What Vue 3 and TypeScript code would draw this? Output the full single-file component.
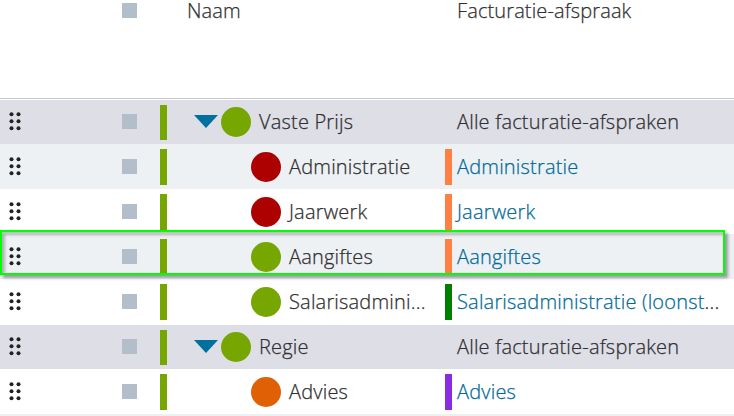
<script setup lang="ts">
interface Row { name: string; agreement: string; kind: 'group' | 'item'; dot: string; bar?: string }
const rows: Row[] = [
  { name: 'Vaste Prijs', agreement: 'Alle facturatie-afspraken', kind: 'group', dot: 'green' },
  { name: 'Administratie', agreement: 'Administratie', kind: 'item', dot: 'red', bar: 'coral' },
  { name: 'Jaarwerk', agreement: 'Jaarwerk', kind: 'item', dot: 'red', bar: 'coral' },
  { name: 'Aangiftes', agreement: 'Aangiftes', kind: 'item', dot: 'green', bar: 'coral' },
  { name: 'Salarisadmini...', agreement: 'Salarisadministratie (loonst', kind: 'item', dot: 'green', bar: 'forest' },
  { name: 'Regie', agreement: 'Alle facturatie-afspraken', kind: 'group', dot: 'green' },
  { name: 'Advies', agreement: 'Advies', kind: 'item', dot: 'orange', bar: 'purple' },
]
</script>

<template>
  <div class="sheet">
    <div class="head">
      <span></span><span class="box"></span><span></span>
      <span class="title">Naam</span><span></span><span class="title">Facturatie-afspraak</span>
    </div>
    <div v-for="(row, i) in rows" :key="i" class="row" :class="[row.kind, { alt: i === 1 || i === 3 }]">
      <svg class="grip" width="30" height="20" viewBox="0 0 30 20">
        <template v-for="y in [2.2, 9.2, 16.2]" :key="y">
          <circle cx="11.5" :cy="y" r="2" /><circle cx="18.5" :cy="y" r="2" />
        </template>
      </svg>
      <span class="box"></span>
      <span class="status"></span>
      <div class="name">
        <svg v-if="row.kind === 'group'" class="arrow" width="24" height="13" viewBox="0 0 24 13"><path d="M0 0H24L12 13Z" /></svg>
        <span class="dot" :class="row.dot"></span>
        <span>{{ row.name }}</span>
      </div>
      <span class="bar" :class="row.bar"></span>
      <span class="agreement">{{ row.agreement }}<span v-if="row.bar === 'forest'" class="more">...</span></span>
    </div>
    <div class="row alt"></div>
    <div class="focus"></div>
  </div>
</template>

<style scoped>
.sheet { position: relative; width: 734px; height: 416px; overflow: hidden; background: #fff; font: 300 20px/30px "Open Sans", sans-serif; letter-spacing: .19px; -webkit-text-stroke: .25px currentColor; color: #2f2f2f; }
.head, .row { display: grid; grid-template-columns: 122px 38px 27px 258px 12px 1fr; }
.head { height: 98px; border-bottom: 1px solid #c8c8c8; }
.head .box { margin-top: 3px; }
.title { line-height: 22px; letter-spacing: .12px; }
.row { height: 45px; box-sizing: border-box; align-items: start; white-space: nowrap; }
.group { background: #dedee7; border-top: 1px solid #fff; }
.alt { background: #edf1f4; }
.box { width: 15px; height: 15px; background: #b2bfcb; }
.row .box { margin-top: 15px; }
.group .box { margin-top: 14px; }
.grip { fill: #222; margin-top: 13px; }
.group .grip { margin-top: 12px; }
.status, .bar { width: 7px; height: 36px; margin-top: 5px; }
.status { background: #76a600; }
.group .status { height: 35px; }
.name { display: flex; align-items: center; margin-top: 8px; }
.agreement { margin-top: 8px; }
.group .name, .group .agreement { margin-top: 7px; }
.item .name { padding-left: 64px; }
.group .name { padding-left: 7px; }
.arrow { fill: #00719e; margin: 0 3px 1px 0; }
.dot { width: 30px; height: 30px; border-radius: 50%; margin-right: 8px; }
.green { background: #76a600; }
.red { background: #ad0000; }
.orange { background: #df6005; }
.coral { background: #ff8044; }
.forest { background: #008000; }
.purple { background: #8a2be2; }
.item .agreement { color: #006a98; }
.item .more { color: #222; }
.focus { position: absolute; left: 0; top: 230px; width: 725px; height: 45px; box-sizing: border-box; border: 2px solid #0f0; box-shadow: 3px 3px 3px rgba(0, 0, 0, .36), inset 3px 3px 3px rgba(0, 0, 0, .26); }
</style>
<style>
body { margin: 0; }
</style>
